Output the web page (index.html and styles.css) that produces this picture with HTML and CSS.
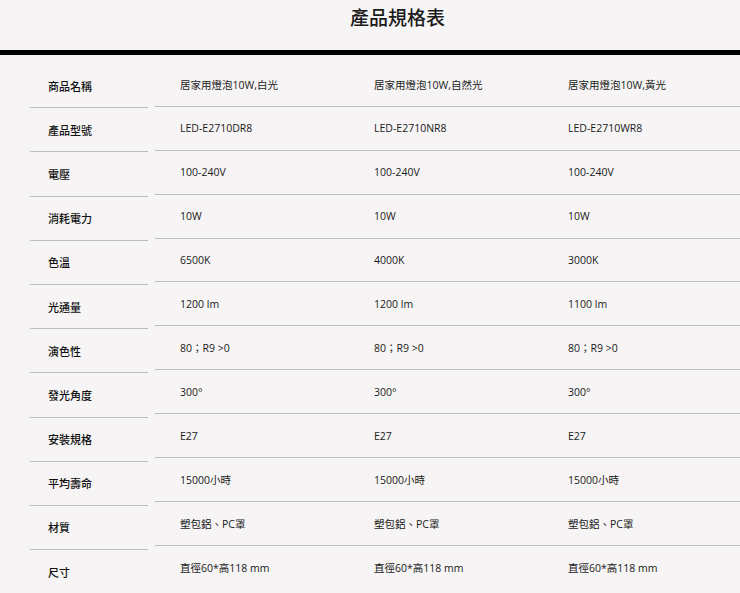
FILE: index.html
```html
<!DOCTYPE html>
<html lang="zh-Hant">
<head>
<meta charset="utf-8">
<title>產品規格表</title>
<link rel="stylesheet" href="styles.css">
</head>
<body>
<header class="head"><h1 class="title">產品規格表</h1></header>
<div class="bar"></div>
<section class="spec">
  <div class="labels">
    <div class="lab">商品名稱</div>
    <div class="lab">產品型號</div>
    <div class="lab">電壓</div>
    <div class="lab">消耗電力</div>
    <div class="lab">色溫</div>
    <div class="lab">光通量</div>
    <div class="lab">演色性</div>
    <div class="lab">發光角度</div>
    <div class="lab">安裝規格</div>
    <div class="lab">平均壽命</div>
    <div class="lab">材質</div>
    <div class="lab">尺寸</div>
  </div>
  <div class="values">
    <div class="row"><span>居家用燈泡10W,白光</span><span>居家用燈泡10W,自然光</span><span>居家用燈泡10W,黃光</span></div>
    <div class="row"><span>LED-E2710DR8</span><span>LED-E2710NR8</span><span>LED-E2710WR8</span></div>
    <div class="row"><span>100-240V</span><span>100-240V</span><span>100-240V</span></div>
    <div class="row"><span>10W</span><span>10W</span><span>10W</span></div>
    <div class="row"><span>6500K</span><span>4000K</span><span>3000K</span></div>
    <div class="row"><span>1200 lm</span><span>1200 lm</span><span>1100 lm</span></div>
    <div class="row"><span>80；R9 &gt;0</span><span>80；R9 &gt;0</span><span>80；R9 &gt;0</span></div>
    <div class="row"><span>300°</span><span>300°</span><span>300°</span></div>
    <div class="row"><span>E27</span><span>E27</span><span>E27</span></div>
    <div class="row"><span>15000小時</span><span>15000小時</span><span>15000小時</span></div>
    <div class="row"><span>塑包鋁、PC罩</span><span>塑包鋁、PC罩</span><span>塑包鋁、PC罩</span></div>
    <div class="row"><span>直徑60*高118 mm</span><span>直徑60*高118 mm</span><span>直徑60*高118 mm</span></div>
  </div>
</section>
</body>
</html>
```
FILE: styles.css
```css
html, body {
  margin: 0;
  padding: 0;
  background: #f6f4f4;
  overflow: hidden;
}
body {
  width: 740px;
  height: 593px;
  color: #1a1a1a;
  font-family: "Open Sans", "Noto Sans CJK TC", sans-serif;
}
.head {
  height: 50px;
  padding-left: 55px;
  box-sizing: border-box;
}
.title {
  margin: 0;
  text-align: center;
  font-family: "Noto Sans CJK TC", sans-serif;
  font-size: 19px;
  font-weight: 500;
  line-height: 34px;
  color: #1c1c1c;
}
.bar {
  height: 5px;
  background: #000;
}
.spec {
  display: flex;
  padding-left: 30px;
  padding-top: 9px;
}
.labels {
  width: 118px;
  flex: none;
}
.lab {
  height: 43.2px;
  border-bottom: 1px solid #bdbdbd;
  padding-left: 18px;
  display: flex;
  align-items: center;
  font-family: "Noto Sans CJK TC", sans-serif;
  font-size: 11px;
  font-weight: 500;
  color: #111;
}
.lab:last-child {
  border-bottom: none;
}
.values {
  margin-left: 7px;
  margin-top: -1px;
  flex: 1;
  min-width: 0;
}
.row {
  height: 42.9px;
  border-bottom: 1px solid #bdbdbd;
  display: grid;
  grid-template-columns: 194px 194px 194px;
  align-items: center;
  font-size: 10.5px;
}
.row:last-child {
  border-bottom: none;
}
.row span {
  padding-left: 25px;
  white-space: nowrap;
}
```
